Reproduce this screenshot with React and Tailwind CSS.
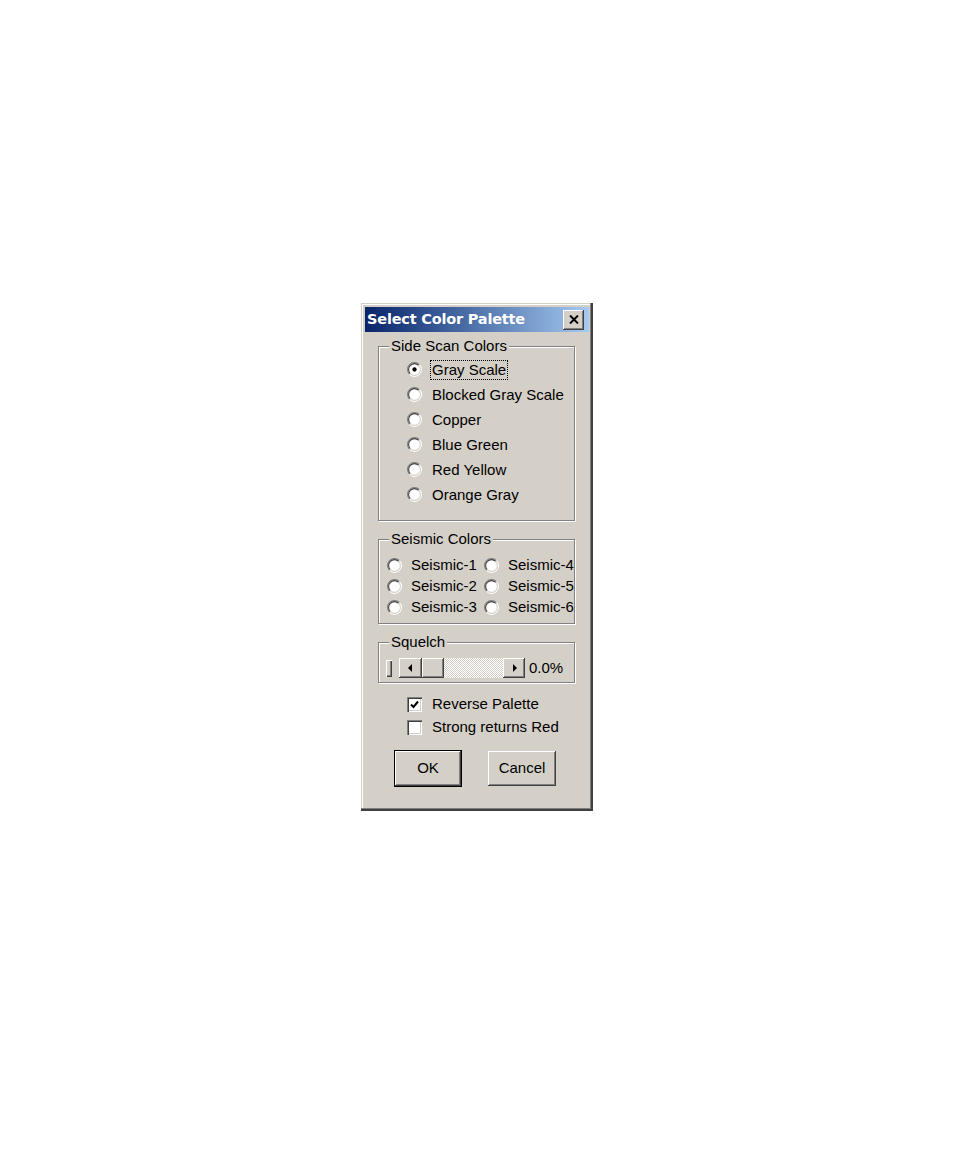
import React from 'react';

const raised = 'shadow-[inset_-1px_-1px_#404040,inset_1px_1px_#fff,inset_-2px_-2px_#808080,inset_2px_2px_#D4D0C8]';

function Radio({ checked }) {
  return (
    <svg width="15" height="15" viewBox="0 0 14 14" className="shrink-0">
      <circle cx="7" cy="7" r="6" fill="#fff" />
      <path d="M2.4 11.6A6.5 6.5 0 0 1 11.6 2.4" stroke="#808080" fill="none" />
      <path d="M11.6 2.4A6.5 6.5 0 0 1 2.4 11.6" stroke="#fff" fill="none" />
      <path d="M3.11 10.89A5.5 5.5 0 0 1 10.89 3.11" stroke="#404040" fill="none" />
      <path d="M10.89 3.11A5.5 5.5 0 0 1 3.11 10.89" stroke="#D4D0C8" fill="none" />
      {checked && <circle cx="7" cy="7" r="2" fill="#000" />}
    </svg>
  );
}

function Checkbox({ checked }) {
  return (
    <div className="w-[15px] h-[15px] shrink-0 bg-white flex items-center justify-center shadow-[inset_1px_1px_#808080,inset_2px_2px_#404040,inset_-1px_-1px_#fff,inset_-2px_-2px_#D4D0C8]">
      {checked && (
        <svg width="9" height="9" viewBox="0 0 9 9">
          <path d="M1 4.5 L3.5 7 L8 1.5" stroke="#000" strokeWidth="2" fill="none" />
        </svg>
      )}
    </div>
  );
}

function GroupBox({ label, className, children }) {
  return (
    <div className={`ml-[13px] w-[197px] border border-[#808080] shadow-[inset_1px_1px_#fff,1px_1px_#fff] ${className}`}>
      <div className="-mt-[9px] ml-[10px] w-fit bg-[#D4D0C8] px-[2px] leading-4">{label}</div>
      {children}
    </div>
  );
}

function Arrow({ dir }) {
  return (
    <svg width="5" height="8" viewBox="0 0 5 8">
      {dir === 'left' ? <path d="M4 0 L0 4 L4 8 Z" fill="#000" /> : <path d="M1 0 L5 4 L1 8 Z" fill="#000" />}
    </svg>
  );
}

const sideScan = ['Gray Scale', 'Blocked Gray Scale', 'Copper', 'Blue Green', 'Red Yellow', 'Orange Gray'];
const seismic = ['Seismic-1', 'Seismic-4', 'Seismic-2', 'Seismic-5', 'Seismic-3', 'Seismic-6'];

export default function App() {
  return (
    <div className="min-h-[1159px] bg-white pt-[303px] pl-[361px] font-['Liberation_Sans',Arial,sans-serif] text-[15px] text-black">
      <div className="w-[232px] h-[508px] bg-[#D4D0C8] p-1 shadow-[inset_-1px_-1px_#404040,inset_-2px_-2px_#404040,inset_-3px_-3px_#808080,inset_1px_1px_#D4D0C8,inset_2px_2px_#fff]">
        {/* Title bar */}
        <div className="h-[25px] flex items-center justify-between pl-[2px] pr-[5px] bg-gradient-to-r from-[#0A246A] to-[#A6CAF0]">
          <span className="text-white font-bold text-[14.5px] font-['DejaVu_Sans',sans-serif] tracking-[-0.2px]">Select Color Palette</span>
          <div className={`w-[21px] h-[20px] bg-[#D4D0C8] flex items-center justify-center ${raised}`}>
            <svg width="10" height="9" viewBox="0 0 10 9">
              <path d="M1 0.5 L9 8.5 M9 0.5 L1 8.5" stroke="#000" strokeWidth="2" />
            </svg>
          </div>
        </div>

        {/* Side scan colors */}
        <GroupBox label="Side Scan Colors" className="mt-[14px] h-[175px]">
          <div className="mt-[3px] pl-[28px]">
            {sideScan.map((name, i) => (
              <div key={name} className="h-[25px] flex items-center gap-[8px]">
                <Radio checked={i === 0} />
                <span className={`px-[1px] leading-[18px] border border-dotted whitespace-nowrap ${i === 0 ? 'border-black' : 'border-transparent'}`}>{name}</span>
              </div>
            ))}
          </div>
        </GroupBox>

        {/* Seismic colors */}
        <GroupBox label="Seismic Colors" className="mt-[18px] h-[85px]">
          <div className="mt-[8px] pl-[8px] grid grid-cols-[97px_97px]">
            {seismic.map(name => (
              <div key={name} className="h-[21px] flex items-center gap-[9px] whitespace-nowrap">
                <Radio />
                <span>{name}</span>
              </div>
            ))}
          </div>
        </GroupBox>

        {/* Squelch */}
        <GroupBox label="Squelch" className="mt-[18px] h-[41px]">
          <div className="mt-[8px] pl-[7px] h-[20px] flex items-center">
            <div className="w-[6px] h-[17px] shadow-[inset_1px_1px_#fff,inset_-1px_-1px_#404040,inset_-2px_-2px_#808080]" />
            <div className={`ml-[7px] w-[23px] h-[20px] flex items-center justify-center ${raised}`}>
              <Arrow dir="left" />
            </div>
            <div className={`w-[22px] h-[20px] ${raised}`} />
            <div className="w-[59px] h-[20px] bg-[repeating-conic-gradient(#fff_0_25%,#D4D0C8_0_50%)] bg-[length:2px_2px]" />
            <div className={`w-[22px] h-[20px] flex items-center justify-center ${raised}`}>
              <Arrow dir="right" />
            </div>
            <span className="ml-[4px]">0.0%</span>
          </div>
        </GroupBox>

        {/* Checkboxes */}
        <div className="mt-[10px] pl-[42px]">
          <div className="h-[23px] flex items-center gap-[10px]">
            <Checkbox checked />
            <span>Reverse Palette</span>
          </div>
          <div className="h-[23px] flex items-center gap-[10px]">
            <Checkbox />
            <span>Strong returns Red</span>
          </div>
        </div>

        {/* Buttons */}
        <div className="mt-[11px] pl-[29px] flex items-center gap-[26px]">
          <div className="w-[68px] h-[37px] border border-black">
            <div className={`w-full h-full flex items-center justify-center ${raised}`}>OK</div>
          </div>
          <div className={`w-[68px] h-[35px] flex items-center justify-center ${raised}`}>Cancel</div>
        </div>
      </div>
    </div>
  );
}
